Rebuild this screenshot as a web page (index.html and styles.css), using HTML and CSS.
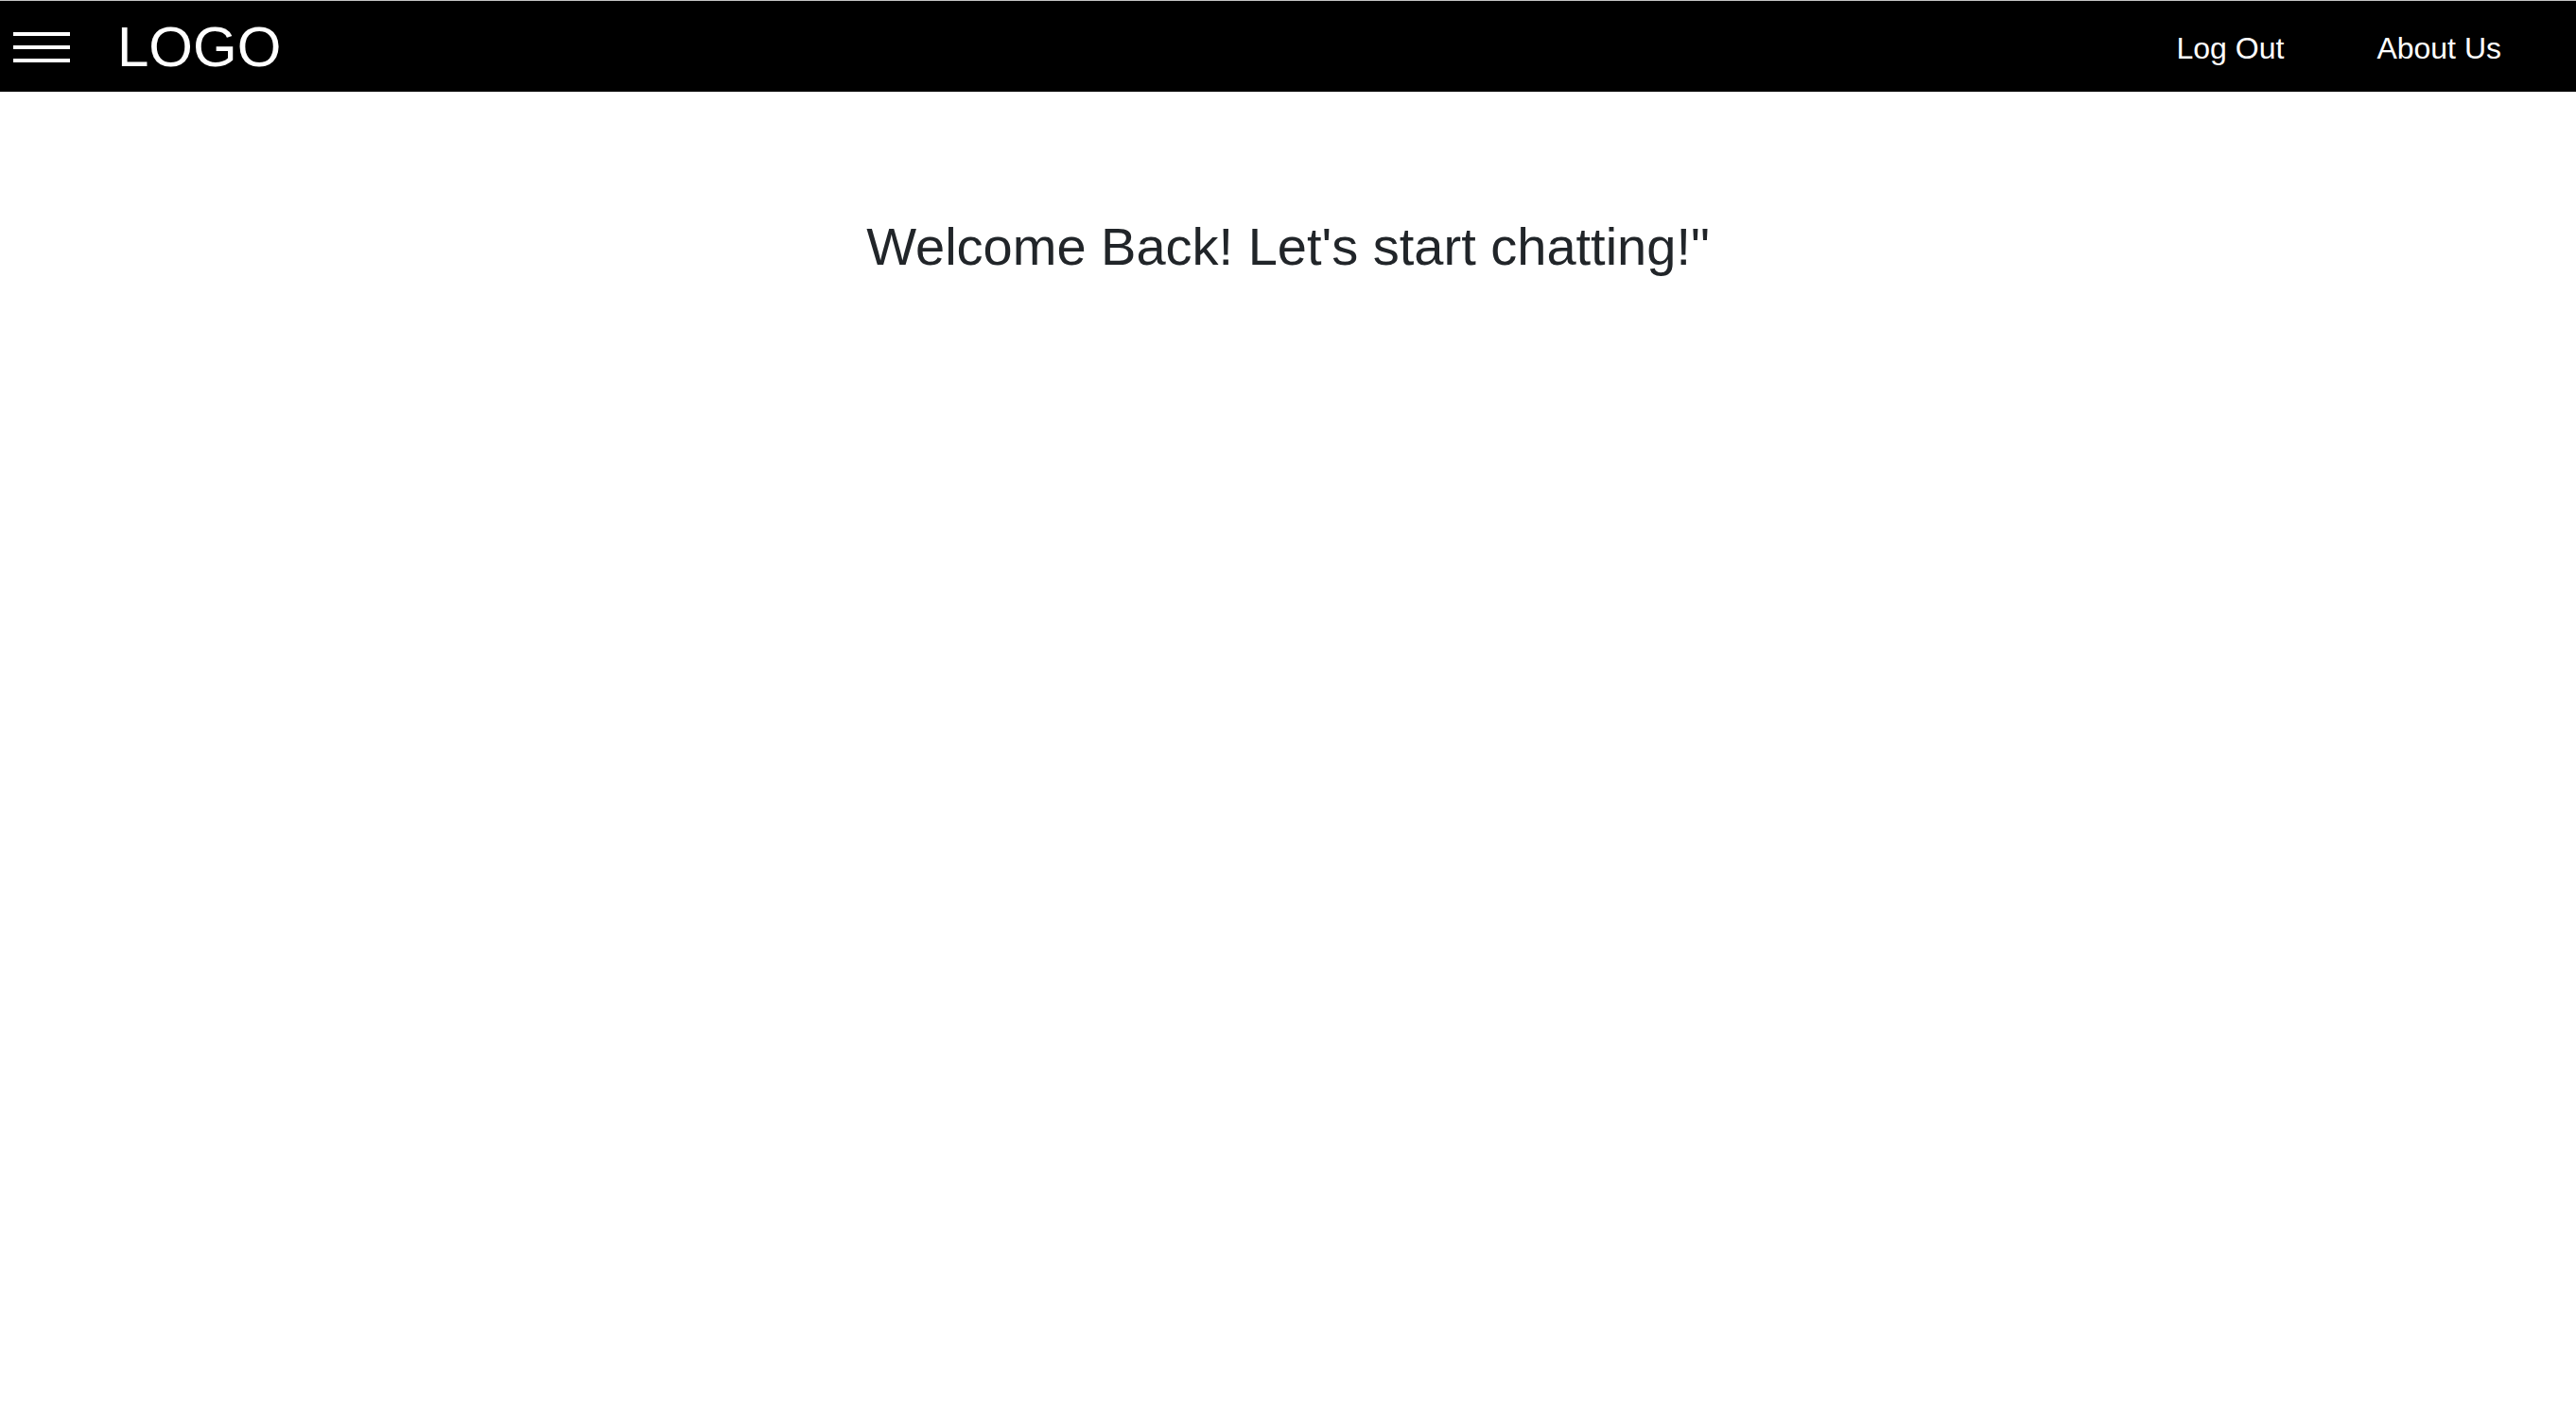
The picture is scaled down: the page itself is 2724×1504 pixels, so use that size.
FILE: index.html
```html
<!DOCTYPE html>
<html lang="en">
<head>
<meta charset="utf-8">
<title>Chat</title>
<link rel="stylesheet" href="styles.css">
</head>
<body>
<nav class="navbar">
  <div class="nav-left">
    <button class="hamburger" aria-label="Menu">
      <span class="bar"></span>
      <span class="bar"></span>
      <span class="bar"></span>
    </button>
    <a class="logo" href="#">LOGO</a>
  </div>
  <div class="nav-right">
    <a class="nav-link" href="#">Log Out</a>
    <a class="nav-link" href="#">About Us</a>
  </div>
</nav>
<main class="content">
  <h1 class="welcome">Welcome Back! Let's start chatting!"</h1>
</main>
</body>
</html>
```

FILE: styles.css
```css
html, body {
  margin: 0;
  padding: 0;
  background: #ffffff;
}

body {
  font-family: "Liberation Sans", Arial, Helvetica, sans-serif;
  color: #212529;
  min-height: 1504px;
}

.navbar {
  display: flex;
  justify-content: space-between;
  align-items: center;
  height: 96px;
  background: #000000;
  border-top: 1px solid #c4c4c4;
}

.nav-left {
  display: flex;
  align-items: center;
}

.hamburger {
  display: flex;
  flex-direction: column;
  gap: 10px;
  width: 60px;
  margin: 2px 0 0 14px;
  padding: 0;
  border: 0;
  background: transparent;
  cursor: pointer;
}

.bar {
  display: block;
  width: 60px;
  height: 4px;
  background: #ffffff;
}

.logo {
  margin-left: 50px;
  font-size: 60px;
  line-height: 1;
  padding-top: 2px;
  color: #ffffff;
  text-decoration: none;
}

.nav-right {
  display: flex;
  align-items: center;
  gap: 98px;
  padding-right: 79px;
}

.nav-link {
  font-size: 32px;
  line-height: 1;
  padding-top: 3px;
  color: #ffffff;
  text-decoration: none;
}

.content {
  text-align: center;
}

.welcome {
  margin: 130px 0 0;
  font-size: 56px;
  line-height: 1.2;
  font-weight: 400;
  color: #212529;
}
```
